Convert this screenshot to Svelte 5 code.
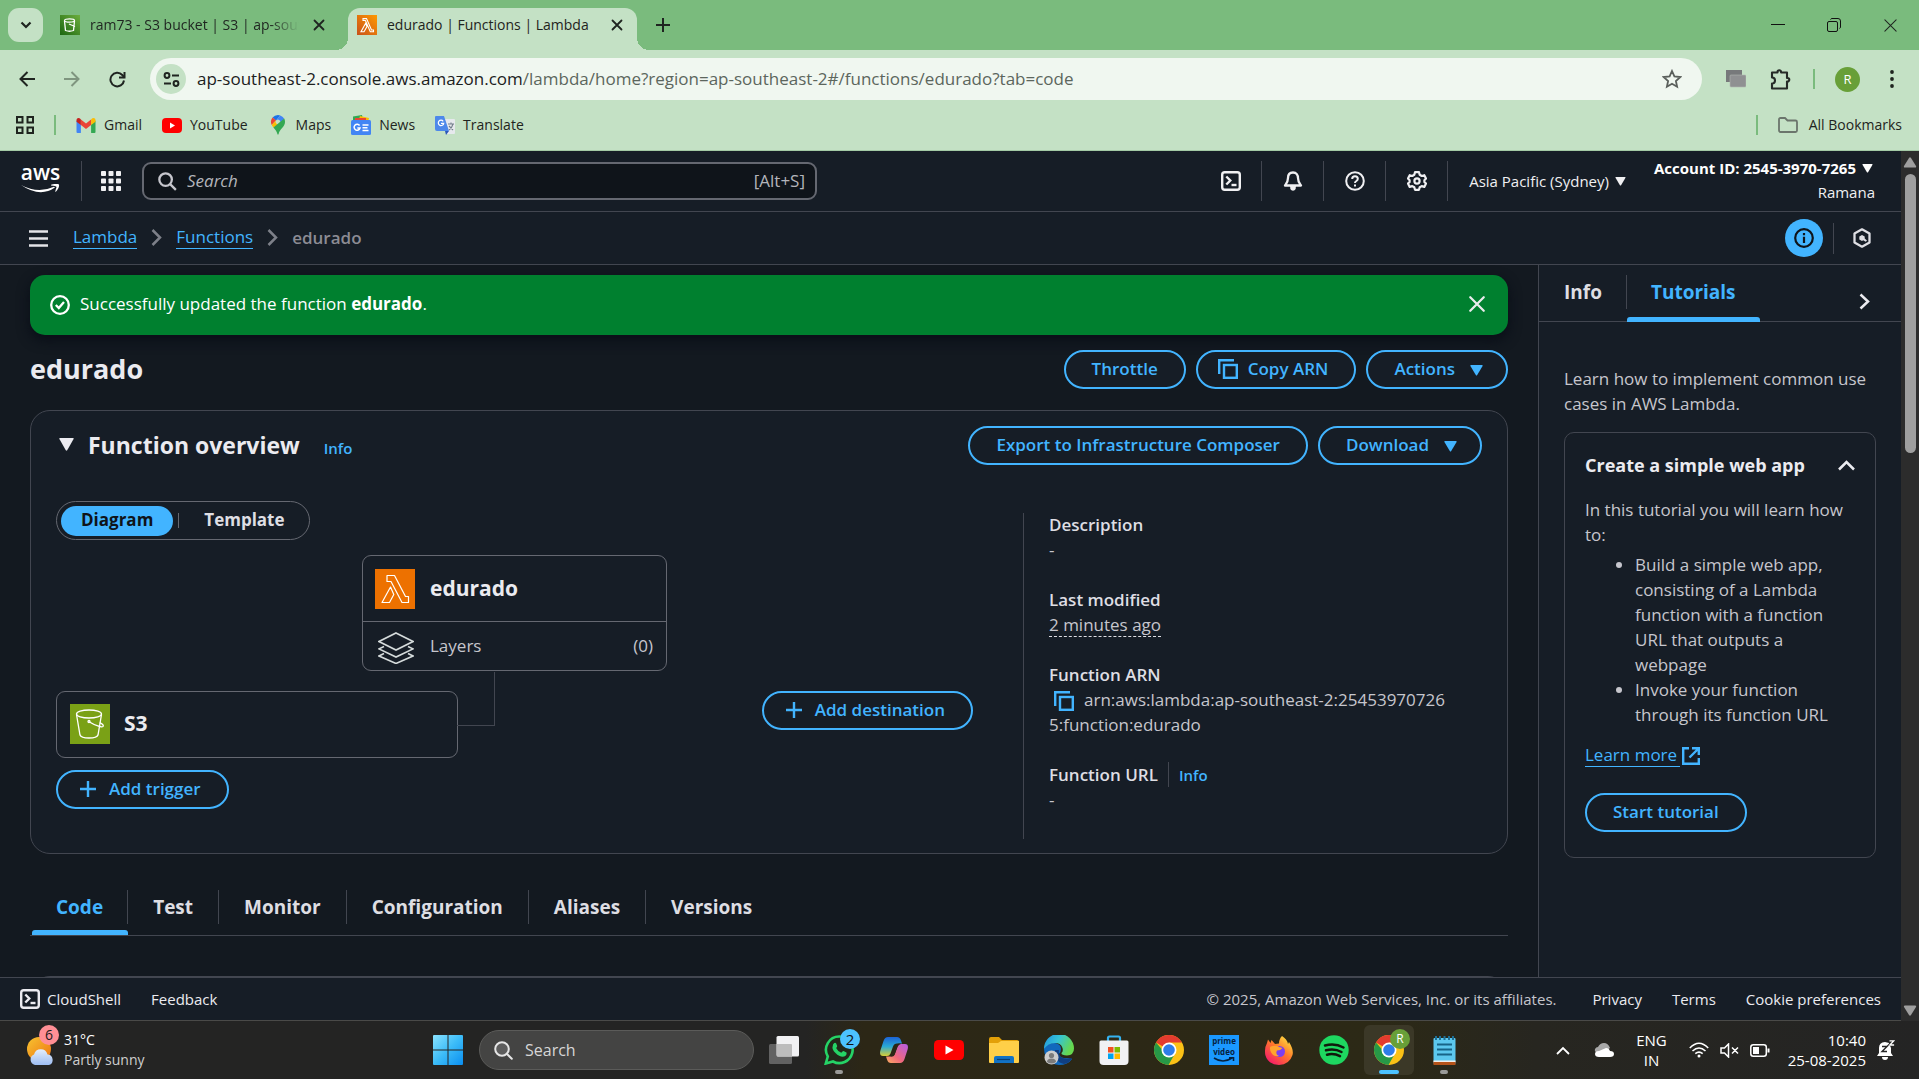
<script>
  const bookmarks = [
    { name: 'Gmail', icon: 'gmail' },
    { name: 'YouTube', icon: 'youtube' },
    { name: 'Maps', icon: 'maps' },
    { name: 'News', icon: 'news' },
    { name: 'Translate', icon: 'translate' }
  ];
  const tabs = ['Code', 'Test', 'Monitor', 'Configuration', 'Aliases', 'Versions'];
  const apps = [
    'taskview', 'whatsapp', 'copilot', 'youtube', 'explorer', 'edge', 'store',
    'chrome', 'prime', 'firefox', 'spotify', 'chrome-active', 'notepad'
  ];
  let activeTab = $state('Code');
  let consoleQuery = $state('');
  let address = 'ap-southeast-2.console.aws.amazon.com';
  let addressPath = '/lambda/home?region=ap-southeast-2#/functions/edurado?tab=code';
</script>

{#snippet closeIcon(size, width)}
  <svg width={size} height={size} viewBox="0 0 16 16" fill="none" stroke="currentColor" stroke-width={width} stroke-linecap="round"><path d="M2 2l12 12M14 2L2 14" /></svg>
{/snippet}

{#snippet shellIcon()}
  <svg width="20" height="20" viewBox="0 0 20 20" fill="none" stroke="currentColor" stroke-width="2.4"><rect x="1.2" y="1.2" width="17.6" height="17.6" rx="2.5" /><path d="M5.3 5.5l4 4-4 4" /><path d="M10.5 14h5" /></svg>
{/snippet}

{#snippet caret()}
  <svg class="caret" width="13" height="11" viewBox="0 0 13 11" fill="currentColor"><path d="M1 0h11q1 0 .6 1L7.2 10q-.7 1-1.4 0L.4 1Q0 0 1 0z" /></svg>
{/snippet}

{#snippet plus()}
  <svg width="16" height="16" viewBox="0 0 16 16" fill="none" stroke="currentColor" stroke-width="2.4"><path d="M8 0v16M0 8h16" /></svg>
{/snippet}

{#snippet copyIcon()}
  <svg width="20" height="20" viewBox="0 0 20 20" fill="none" stroke="currentColor" stroke-width="2.4"><path d="M1.2 15V1.2H16" /><rect x="6" y="6" width="12.8" height="12.8" /></svg>
{/snippet}

{#snippet chevron()}
  <svg class="chevron" width="11" height="17" viewBox="0 0 11 17" fill="none" stroke="currentColor" stroke-width="2.5"><path d="M1.5 1l7.5 7.5L1.5 16" /></svg>
{/snippet}

{#snippet bucket(size)}
  <svg width={size} height={size} viewBox="0 0 40 40"><rect width="40" height="40" fill="#7aa116" /><g fill="none" stroke="#fff" stroke-width="1.3"><ellipse cx="19" cy="10" rx="12.5" ry="4" /><path d="M6.5 10.5L10 31q1 3 9 3t9-3l3.5-20.500" /><circle cx="19" cy="17.500" r="1" /><path d="M19.500 18c4 2.500 13.500 6.500 13.800 4 .2-1.200-2-2.600-3.600-3.400" /></g></svg>
{/snippet}

{#snippet chromeIcon()}
  <svg width="30" height="30" viewBox="0 0 30 30"><circle cx="15" cy="15" r="15" fill="#fbc116" /><path d="M15 15L2 7.500A15 15 0 0 1 28 7.500H15z" fill="#e33b2e" /><path d="M2 7.500A15 15 0 0 0 14.500 30L21 18.500 15 15H8.500z" fill="#279847" /><circle cx="15" cy="15" r="7.500" fill="#fff" /><circle cx="15" cy="15" r="5.800" fill="#2f7de9" /></svg>
{/snippet}

{#snippet favicon(kind)}
  {#if kind === 'gmail'}
    <svg width="20" height="15" viewBox="0 0 19 15"><path d="M0 2.500V14q0 1 1 1h3.400V6.500z" fill="#4285f4" /><path d="M14.600 15H18q1 0 1-1V2.500l-4.400 4z" fill="#34a853" /><path d="M4.400 7V1.600L9.500 5.500l5.100-3.900V7L9.500 11z" fill="#ea4335" /><path d="M0 3v-.8C0 0 2.400-.5 4 .9l.4.700V7L0 3.800z" fill="#c5221f" /><path d="M19 3v-.8C19 0 16.600-.5 15 .9l-.4.700V7L19 3.800z" fill="#fbbc04" /></svg>
  {:else if kind === 'youtube'}
    <svg width="20" height="15" viewBox="0 0 20 15"><rect width="20" height="15" rx="4" fill="#f00" /><path d="M8 4.500l5 3-5 3z" fill="#fff" /></svg>
  {:else if kind === 'maps'}
    <svg width="20" height="20" viewBox="-3 0 20 20"><path d="M7 0a7 7 0 0 0-5.400 2.500L5 5.500 9.200.4A7 7 0 0 0 7 0z" fill="#1a73e8" /><path d="M1.600 2.500A7 7 0 0 0 .7 10L5 5.300z" fill="#ea4335" /><path d="M9.200.4L5.300 5a2.600 2.600 0 0 1 3.800 3.400l4-5A7 7 0 0 0 9.200.4z" fill="#4285f4" /><path d="M.7 10l1.700 2.500L9 8.600A2.600 2.600 0 0 1 5 5.300z" fill="#fbbc04" /><path d="M13.200 3.600L2.400 12.500C4.500 14.700 6 17 6.400 19q.6 1.600 1.200 0c.9-5 6.400-7 6.400-12a7 7 0 0 0-.8-3.400z" fill="#34a853" /></svg>
  {:else if kind === 'news'}
    <svg width="20" height="20" viewBox="0 0 20 20"><path d="M2 1.500L11 0l1 6H2z" fill="#34a853" /><path d="M9 1l9 2-1 4H7z" fill="#fbbc04" /><path d="M4 3h11v4H4z" fill="#ea4335" /><rect y="5" width="20" height="15" rx="1.500" fill="#4285f4" /><path d="M8.600 10.500A3 3 0 1 0 9 13H6.300M11.500 10h6M11.500 12.700h5M11.500 15.400h6" fill="none" stroke="#fff" stroke-width="1.500" /></svg>
  {:else}
    <svg width="20" height="20" viewBox="0 0 20 20"><path d="M8 4h11q1 0 1 1v13q0 1-1 1h-7z" fill="#e6e9ed" /><path d="M1 1h8l5 15H2q-2 0-2-2V2q0-1 1-1z" fill="#4d88ea" /><path d="M10 16h4l-3 4z" fill="#2a56b8" /><path d="M8.200 6.300A2.700 2.700 0 1 0 8.700 8.300H6" fill="none" stroke="#fff" stroke-width="1.200" /><path d="M13 9h6M16 7.500V9M18 9q-1 4-4 6M14 11l4 4" fill="none" stroke="#75808d" stroke-width="1.100" /></svg>
  {/if}
{/snippet}

<div class="screen">
  <header class="browser">
    <div class="tabstrip">
      <button class="tab-search" aria-label="Search tabs">
        <svg width="12" height="8" viewBox="0 0 12 8" fill="none" stroke="currentColor" stroke-width="2.200"><path d="M1.500 1.500L6 6l4.500-4.500" /></svg>
      </button>
      <div class="browser-tab">
        <span class="fav s3">
          <svg width="20" height="20" viewBox="0 0 20 20" fill="none" stroke="#fff" stroke-width="1.300"><ellipse cx="9.500" cy="5.500" rx="5" ry="1.600" /><path d="M4.500 6l1 9.500q4 1.500 8 0L14.500 6M9 9l6 2.500" /></svg>
        </span>
        <span class="tab-title faded">ram73 - S3 bucket | S3 | ap-sout</span>
        <button class="plain" aria-label="Close tab">{@render closeIcon(12, 2.4)}</button>
      </div>
      <div class="browser-tab current">
        <span class="fav lambda">
          <svg width="20" height="20" viewBox="0 0 20 20" fill="none" stroke="#fff" stroke-width="1.100"><path d="M6 3.500h3.500l5 11.500h2v1.800h-3.200L8.300 5.400H6zM8.500 8.500L4 16.800h3l3-5.300z" /></svg>
        </span>
        <span class="tab-title">edurado | Functions | Lambda</span>
        <button class="plain" aria-label="Close tab">{@render closeIcon(12, 2.4)}</button>
      </div>
      <button class="plain new-tab" aria-label="New tab">
        <svg width="14" height="14" viewBox="0 0 14 14" fill="none" stroke="currentColor" stroke-width="2"><path d="M7 0v14M0 7h14" /></svg>
      </button>
      <div class="window-controls">
        <button class="plain" aria-label="Minimize"><svg width="14" height="14" viewBox="0 0 14 14" stroke="#111" fill="none"><path d="M0 6.500h14" /></svg></button>
        <button class="plain" aria-label="Restore"><svg width="14" height="14" viewBox="0 0 14 14" stroke="#111" fill="none"><rect x=".5" y="3.500" width="10" height="10" rx="1.500" /><path d="M3.500 1.500q.5-1 1.500-1h6q2.500 0 2.500 2.500v6q0 1-1 1.500" /></svg></button>
        <button class="plain" aria-label="Close window">{@render closeIcon(15, 1.1)}</button>
      </div>
    </div>

    <div class="toolbar">
      <button class="plain nav" aria-label="Back"><svg width="16" height="16" viewBox="0 0 16 16" fill="none" stroke="currentColor" stroke-width="2"><path d="M16 8H2M8.500 1L1.500 8l7 7" /></svg></button>
      <button class="plain nav off" aria-label="Forward"><svg width="16" height="16" viewBox="0 0 16 16" fill="none" stroke="currentColor" stroke-width="2"><path d="M0 8h14M7.500 1l7 7-7 7" /></svg></button>
      <button class="plain nav" aria-label="Reload"><svg width="17" height="17" viewBox="0 0 17 17" fill="none" stroke="currentColor" stroke-width="2"><path d="M15 9.500A6.800 6.800 0 1 1 13.300 4L15.500 6.500" /><path d="M15.500 1v5.500H10" /></svg></button>
      <div class="omnibox">
        <button class="plain site-info" aria-label="Site information"><svg width="17" height="17" viewBox="0 0 17 17" fill="none" stroke="currentColor" stroke-width="2"><circle cx="4" cy="4.500" r="2.400" /><path d="M9 4.500h7M1 12.500h7" /><circle cx="13" cy="12.500" r="2.400" /></svg></button>
        <a class="url" href="#top"><span>{address}</span>{addressPath}</a>
        <button class="plain star" aria-label="Bookmark this page"><svg width="20" height="20" viewBox="0 0 20 20" fill="none" stroke="currentColor" stroke-width="1.800"><path d="M10 2l2.400 5.400 5.900.6-4.400 4 1.200 5.800L10 14.800l-5.100 3L6.100 12 1.700 8l5.900-.6z" /></svg></button>
      </div>
      <div class="extensions">
        <svg width="20" height="18" viewBox="0 0 20 18"><rect x="0" y="0" width="16" height="12" fill="#77797b" /><rect x="4" y="5" width="16" height="12" rx="1" fill="#8f9092" stroke="#b2b7b2" stroke-width=".6" /></svg>
        <svg width="21" height="21" viewBox="0 0 21 21" fill="none" stroke="#262b27" stroke-width="2.100"><path d="M2 3.500h5.500V3a1.800 1.800 0 0 1 3.600 0v.500H17V9h.5a1.800 1.800 0 0 1 0 3.600H17V19.500H2v-5a3 3 0 0 0 0-6z" stroke-linejoin="round" /></svg>
        <i class="green-bar"></i>
        <span class="avatar">R</span>
        <svg width="4" height="18" viewBox="0 0 4 18" fill="#1f241f"><circle cx="2" cy="2" r="1.900" /><circle cx="2" cy="9" r="1.900" /><circle cx="2" cy="16" r="1.900" /></svg>
      </div>
    </div>

    <nav class="bookmarks">
      <button class="plain" aria-label="Apps"><svg width="18" height="18" viewBox="0 0 18 18" fill="none" stroke="#1f241f" stroke-width="2"><rect x="1" y="1" width="5.500" height="5.500" /><rect x="11.500" y="1" width="5.500" height="5.500" /><rect x="1" y="11.500" width="5.500" height="5.500" /><rect x="11.500" y="11.500" width="5.500" height="5.500" /></svg></button>
      <i class="green-bar"></i>
      {#each bookmarks as mark}
        <a href="#{mark.icon}">{@render favicon(mark.icon)}{mark.name}</a>
      {/each}
      <div class="all-bookmarks">
        <i class="green-bar"></i>
        <a href="#all"><svg width="20" height="16" viewBox="0 0 20 16" fill="none" stroke="#6b756c" stroke-width="1.800"><path d="M1 13V2.500Q1 1 2.500 1H7l2.500 2.500h8Q19 3.500 19 5v8.500q0 1.500-1.500 1.500h-15Q1 15 1 13z" /></svg>All Bookmarks</a>
      </div>
    </nav>
  </header>

  <div class="viewport">
    <div class="console">
      <header class="aws-header">
        <a class="aws-logo" href="#home" aria-label="AWS home">
          <span>aws</span>
          <svg width="39" height="10" viewBox="0 0 39 10" fill="#fff"><path d="M0 1q17 9 33 1.800l1 .8Q19 14 0 1z" /><path d="M30 .8q7-2 8 0 .6 3-3.400 7.200-.8-.2 1-5Q35 1.600 30 1.500z" /></svg>
        </a>
        <i class="rule"></i>
        <button class="plain services" aria-label="Services"><svg width="20" height="20" viewBox="0 0 20 20" fill="#f0f0f2">{#each [0, 7.500, 15] as y}{#each [0, 7.500, 15] as x}<rect {x} {y} width="5" height="5" rx=".8" />{/each}{/each}</svg></button>
        <div class="aws-search">
          <svg width="19" height="19" viewBox="0 0 20 20" fill="none" stroke="#c6c6cd" stroke-width="2.400"><circle cx="8" cy="8" r="6.600" /><path d="M12.800 12.800l6 6" /></svg>
          <input type="text" aria-label="Search services" placeholder="Search" bind:value={consoleQuery} />
          <span>[Alt+S]</span>
        </div>
        <div class="aws-tools">
          <button class="plain tool" aria-label="CloudShell">{@render shellIcon()}</button>
          <button class="plain tool" aria-label="Notifications"><svg width="20" height="20" viewBox="0 0 20 20" fill="none" stroke="currentColor" stroke-width="2.300"><path d="M10 1.500c-3.500 0-5 2.500-5 5.500 0 4-1.500 5.500-3 7.500h16c-1.500-2-3-3.500-3-7.500 0-3-1.500-5.500-5-5.500z" stroke-linejoin="round" /><path d="M7 15q0 3.500 3 3.500t3-3.500z" fill="currentColor" stroke="none" /><path d="M8 17q2 3 4 0" /></svg></button>
          <button class="plain tool" aria-label="Help"><svg width="20" height="20" viewBox="0 0 20 20" fill="none" stroke="currentColor" stroke-width="2"><circle cx="10" cy="10" r="8.800" /><path d="M7.200 8q0-2.700 2.800-2.700t2.800 2.500q0 1.400-1.400 2.200T10 12" /><path d="M10 13.500v2" /></svg></button>
          <button class="plain tool" aria-label="Settings"><svg width="20" height="20" viewBox="0 0 20 20" fill="none" stroke="currentColor" stroke-width="2.200" stroke-linejoin="round"><path d="M8 1.200h4l.7 2.600 2 1.200 2.600-.8 1.700 3.300-1.600 1.700v1.700l1.600 1.700-1.700 3.300-2.600-.8-2 1.200-.7 2.500H8l-.7-2.500-2-1.200-2.600.8L1 12.600l1.600-1.700V9.200L1 7.500l1.700-3.300 2.600.8 2-1.200z" /><circle cx="10" cy="10" r="2.600" /></svg></button>
          <button class="plain region">Asia Pacific (Sydney){@render caret()}</button>
          <button class="plain account"><b>Account ID: 2545-3970-7265{@render caret()}</b><span>Ramana</span></button>
        </div>
      </header>

      <div class="crumbs">
        <button class="plain" aria-label="Open menu"><svg width="19" height="17" viewBox="0 0 19 17" stroke="#e4e4e8" stroke-width="2.600"><path d="M0 1.500h19M0 8.500h19M0 15.500h19" /></svg></button>
        <nav>
          <a href="#lambda">Lambda</a>{@render chevron()}<a href="#functions">Functions</a>{@render chevron()}<b>edurado</b>
        </nav>
        <button class="plain info-toggle" aria-label="Info panel"><svg width="20" height="20" viewBox="0 0 20 20" fill="none" stroke="currentColor" stroke-width="2.200"><circle cx="10" cy="10" r="8.800" /><path d="M10 8.800V15M10 5v2.200" /></svg></button>
        <i class="rule"></i>
        <button class="plain hexagon" aria-label="Amazon Q"><svg width="20" height="20" viewBox="0 0 20 20" fill="none" stroke="currentColor" stroke-width="2.300"><path d="M10 1.300l7.500 4.300v8.800L10 18.700l-7.500-4.300V5.600z" stroke-linejoin="round" /><path d="M10 7l2.700 1.500v2l2.300 2-1.300 1.200-2.500-1.500L10 13l-2.700-1.500v-3z" fill="currentColor" stroke="none" /></svg></button>
      </div>

      <div class="body">
        <main>
          <div class="flash" role="status">
            <svg width="20" height="20" viewBox="0 0 20 20" fill="none" stroke="currentColor" stroke-width="2.300"><circle cx="10" cy="10" r="8.800" /><path d="M5.800 10l3 3 5.200-6" /></svg>
            <p>Successfully updated the function <b>edurado</b>.</p>
            <button class="plain" aria-label="Dismiss">{@render closeIcon(18, 2)}</button>
          </div>

          <div class="title-row">
            <h1>edurado</h1>
            <button class="pill">Throttle</button>
            <button class="pill copy">{@render copyIcon()}Copy ARN</button>
            <button class="pill drop">Actions{@render caret()}</button>
          </div>

          <section class="overview">
            <div class="overview-head">
              <h2><svg width="15" height="13" viewBox="0 0 15 13" fill="currentColor"><path d="M.800 0h13.400q.8 0 .4.900L8.200 12.200q-.7.900-1.400 0L.4.900Q0 0 .800 0z" /></svg>Function overview</h2>
              <a class="info" href="#overview-info">Info</a>
              <button class="pill">Export to Infrastructure Composer</button>
              <button class="pill drop">Download{@render caret()}</button>
            </div>
            <div class="overview-body">
              <div class="diagram">
                <div class="segmented">
                  <button class="on">Diagram</button>
                  <i></i>
                  <button>Template</button>
                </div>
                <div class="node function-node">
                  <div class="node-title">
                    <svg width="40" height="40" viewBox="0 0 40 40"><rect width="40" height="40" fill="#ed7100" /><path d="M12 6.500h7.500l11 21h3v6h-6.500L16 12.500h-4zM15.500 18L7 33.500h7.500l4.300-8z" fill="none" stroke="#fff" stroke-width="1.200" stroke-linejoin="round" /></svg>
                    edurado
                  </div>
                  <div class="layers">
                    <svg width="36" height="32" viewBox="0 0 36 32" fill="none" stroke="#d5dbdb" stroke-width="1.600"><path d="M18 1l17 8.500L18 18 1 9.500z" /><path d="M6 14.500l-5 2.400L18 25l17-8.100-5-2.400M6 21.500L1 24l17 7.500L35 24l-5-2.500" /></svg>
                    <span>Layers</span><span>(0)</span>
                  </div>
                </div>
                <div class="sources">
                  <div class="node s3-node">{@render bucket(40)}S3<i class="link"></i></div>
                  <button class="pill add">{@render plus()}Add destination</button>
                </div>
                <button class="pill add">{@render plus()}Add trigger</button>
              </div>
              <dl>
                <div><dt>Description</dt><dd>-</dd></div>
                <div><dt>Last modified</dt><dd><span class="dashed">2 minutes ago</span></dd></div>
                <div><dt>Function ARN</dt><dd class="arn"><button class="plain" aria-label="Copy ARN">{@render copyIcon()}</button>arn:aws:lambda:ap-southeast-2:254539707265:function:edurado</dd></div>
                <div><dt>Function URL<a class="info" href="#url-info">Info</a></dt><dd>-</dd></div>
              </dl>
            </div>
          </section>

          <div class="tabs" role="tablist">
            {#each tabs as tab}
              <button role="tab" aria-selected={activeTab === tab} class:active={activeTab === tab} onclick={() => (activeTab = tab)}><span>{tab}</span></button>
            {/each}
          </div>
          <section class="next-panel"></section>
        </main>

        <aside>
          <div class="side-tabs" role="tablist">
            <button role="tab" aria-selected="false"><span>Info</span></button>
            <button role="tab" aria-selected="true" class="active"><span>Tutorials</span></button>
            <button class="plain collapse" aria-label="Close panel"><svg width="11" height="17" viewBox="0 0 11 17" fill="none" stroke="currentColor" stroke-width="2.500"><path d="M1.500 1.500l7.500 7-7.500 7" /></svg></button>
          </div>
          <div class="side-body">
            <p>Learn how to implement common use cases in AWS Lambda.</p>
            <div class="card">
              <h3>Create a simple web app<svg width="17" height="11" viewBox="0 0 17 11" fill="none" stroke="currentColor" stroke-width="2.500"><path d="M1 9.500L8.500 2 16 9.500" /></svg></h3>
              <p>In this tutorial you will learn how to:</p>
              <ul>
                <li>Build a simple web app, consisting of a Lambda function with a function URL that outputs a webpage</li>
                <li>Invoke your function through its function URL</li>
              </ul>
              <a class="learn" href="#learn"><span>Learn more</span><svg width="18" height="18" viewBox="0 0 18 18" fill="none" stroke="currentColor" stroke-width="2.400"><path d="M7 1.200H1.200v15.600h15.600V11M10 1.200h6.800V8M16.500 1.500L7.500 10.500" /></svg></a>
              <button class="pill">Start tutorial</button>
            </div>
          </div>
        </aside>
      </div>

      <footer>
        <button class="plain">{@render shellIcon()}CloudShell</button>
        <button class="plain feedback">Feedback</button>
        <span>© 2025, Amazon Web Services, Inc. or its affiliates.</span>
        <a href="#privacy">Privacy</a>
        <a href="#terms">Terms</a>
        <a href="#cookies">Cookie preferences</a>
      </footer>
    </div>
    <div class="scrollbar">
      <svg width="14" height="11" viewBox="0 0 14 11" fill="#9f9f9f"><path d="M6 1q1-1.500 2 0l5 8q.5 1.500-1 1.500H2Q.5 10.500 1 9z" /></svg>
      <i></i>
      <svg width="14" height="11" viewBox="0 0 14 11" fill="#9f9f9f"><path d="M6 10q1 1.500 2 0l5-8Q13.500.5 12 .5H2Q.5.5 1 2z" /></svg>
    </div>
  </div>

  <div class="taskbar">
    <button class="plain weather">
      <span class="weather-icon">
        <svg width="28" height="32" viewBox="0 0 28 32"><defs><linearGradient id="sun" x1="0" y1="0" x2="1" y2="1"><stop offset="0" stop-color="#f7c430" /><stop offset="1" stop-color="#ee7313" /></linearGradient><linearGradient id="cloud" x1="0" y1="0" x2="0" y2="1"><stop offset="0" stop-color="#e4eefc" /><stop offset="1" stop-color="#9dbdf2" /></linearGradient></defs><circle cx="12" cy="15" r="12" fill="url(#sun)" /><path d="M8 31a5.500 5.500 0 0 1-1-10.500 7 7 0 0 1 13.500 0A5.400 5.400 0 0 1 22 31z" fill="url(#cloud)" /></svg>
        <em>6</em>
      </span>
      <span class="weather-text"><span>31°C</span><span>Partly sunny</span></span>
    </button>
    <button class="plain start" aria-label="Start"><svg width="30" height="30" viewBox="0 0 30 30"><defs><linearGradient id="win" x1="0" y1="0" x2="1" y2="1"><stop offset="0" stop-color="#8be3ff" /><stop offset=".5" stop-color="#3cbcf8" /><stop offset="1" stop-color="#0a8ef0" /></linearGradient></defs><path d="M0 1q0-1 1-1h13.500v14.500H0zM15.500 0H29q1 0 1 1v13.500H15.500zM0 15.500h14.500V30H1q-1 0-1-1zM15.500 15.500H30V29q0 1-1 1H15.500z" fill="url(#win)" /></svg></button>
    <div class="task-search">
      <svg width="19" height="19" viewBox="0 0 19 19" fill="none" stroke="#e6e6e6" stroke-width="2"><circle cx="8" cy="8" r="6.800" fill="#5d5d5d" /><path d="M12.800 12.800l5 5" stroke-linecap="round" /></svg>
      <input type="text" aria-label="Search Windows" placeholder="Search" />
    </div>
    <div class="apps">
      {#each apps as app}
        <button class="plain app" class:focused={app === 'chrome-active'} class:running={app === 'whatsapp' || app === 'notepad'} aria-label={app}>
          {#if app === 'taskview'}
            <svg width="30" height="28" viewBox="0 0 30 28"><rect x="0" y="8" width="23" height="20" rx="1.500" fill="#626262" /><rect x="7.500" y="0" width="22.500" height="20.500" rx="1.500" fill="#f2f2f4" /><path d="M8 8h14q1 0 1 1v11.500H9q-1 0-1-1z" fill="#bdbdbd" /></svg>
          {:else if app === 'whatsapp'}
            <svg width="30" height="30" viewBox="0 0 30 30"><path d="M15.500 1.500a13.300 13.300 0 1 1-6.500 25L1.800 28.500l2-7A13.300 13.300 0 0 1 15.500 1.500z" fill="#22281a" stroke="#25d366" stroke-width="2.600" /><path d="M10.300 8q1-.8 1.900.4l1 2.500q.1.800-1.100 2 1.700 3.400 5.200 4.900 1.500-2 2.200-1.800l3 1.500q.8 3.500-3.500 4.300-3.500.2-7.500-3.800T8.700 11.200Q8.800 9 10.300 8z" fill="#25d366" /></svg>
            <em class="badge">2</em>
          {:else if app === 'copilot'}
            <svg width="28" height="26" viewBox="0 0 28 26"><defs><linearGradient id="cp1" x1="0" y1="0" x2="0" y2="1"><stop offset="0" stop-color="#1c63d6" /><stop offset=".5" stop-color="#2aa9d6" /><stop offset="1" stop-color="#d8cf35" /></linearGradient><linearGradient id="cp2" x1="1" y1="0" x2="0" y2="1"><stop offset="0" stop-color="#b45ce8" /><stop offset=".6" stop-color="#f0687c" /><stop offset="1" stop-color="#fbb060" /></linearGradient></defs><path d="M8 0h9q3 0 4 3.500l1 3h-5q-3 0-4 3l-2.500 7q-1 2.500-3.500 2.500H3Q-1 19 .4 13.500L3.500 4Q4.800 0 8 0z" fill="url(#cp1)" /><path d="M20 26h-9q-3 0-4-3.500l-1-3h5q3 0 4-3l2.500-7Q18.500 7 21 7h4q4 0 2.600 5.500L24.500 22q-1.300 4-4.500 4z" fill="url(#cp2)" /><path d="M15 9.500q.5-2.500 4-3h2q-2.500.5-3.500 3.500l-3 8q-.8 1.500-3 1.500-1.500 0-1-1.500z" fill="#2c2716" /></svg>
          {:else if app === 'youtube'}
            <svg width="30" height="20" viewBox="0 0 30 20"><rect width="30" height="20" rx="4.500" fill="#f00" /><path d="M11.500 5.500l8 4.500-8 4.500z" fill="#fff" /></svg>
          {:else if app === 'explorer'}
            <svg width="30" height="26" viewBox="0 0 30 26"><path d="M0 2q0-2 2-2h8l3 3h15q2 0 2 2v8H0z" fill="#e3a008" /><path d="M0 6h9l3-2h18v21q0 1-1 1H1q-1 0-1-1z" fill="#ffcf48" /><path d="M5 26v-5q0-2 2-2h16q2 0 2 2v5z" fill="#1272c4" /><path d="M8 22.500h13" stroke="#0a3f73" stroke-width="1.200" /></svg>
          {:else if app === 'edge'}
            <svg width="30" height="30" viewBox="0 0 30 30"><defs><linearGradient id="eg1" x1="0" y1="0" x2="1" y2=".4"><stop offset="0" stop-color="#1f8fe0" /><stop offset=".5" stop-color="#35c3d6" /><stop offset="1" stop-color="#66d84f" /></linearGradient></defs><path d="M0 14q3-7 11-6 6 1 6 6 0 3-2 5 0 3 5 4 5 0 8 1-4 6-13 6Q1 29 0 14z" fill="#1169bd" /><path d="M0 14A15 15 0 0 1 30 13.500q0 6.500-7 7-6 0-5.500-2.500 2-2 1-5Q17 8 11 8 4 8 0 14z" fill="url(#eg1)" /><path d="M11 15q-1 12 9 14 6-1 8-6-7 2-11-1-3-3-2-7z" fill="#103f82" /><circle cx="7.500" cy="22.500" r="7" fill="#cdcdcd" /><circle cx="7.500" cy="20.500" r="2.600" fill="#7b7b7b" /><path d="M3 27q0-3.500 4.500-3.500T12 27q-4.500 3-9 0z" fill="#7b7b7b" /></svg>
          {:else if app === 'store'}
            <svg width="30" height="30" viewBox="0 0 30 30"><path d="M9 8V3q0-1.500 1.500-1.500h9Q21 1.500 21 3v5" fill="none" stroke="#35b2f0" stroke-width="2.200" /><path d="M.5 7q0-1.500 1.500-1.500h26q1.500 0 1.500 1.500v19q0 4-4 4h-21q-4 0-4-4z" fill="#f1f1f3" /><path d="M9 12h5.500v5.500H9z" fill="#f25022" /><path d="M15.500 12H21v5.500h-5.500z" fill="#7fba00" /><path d="M9 18.500h5.500V24H9z" fill="#00a4ef" /><path d="M15.500 18.500H21V24h-5.500z" fill="#ffb900" /></svg>
          {:else if app === 'chrome'}
            {@render chromeIcon()}
          {:else if app === 'prime'}
            <span class="prime"><span>prime</span><span>video</span><svg width="22" height="6" viewBox="0 0 22 6" fill="none" stroke="#06213d" stroke-width="1.600"><path d="M1 1q9 6 18 0M16 .8h4.500V4" /></svg></span>
          {:else if app === 'firefox'}
            <svg width="28" height="29" viewBox="0 0 28 29"><defs><linearGradient id="ff" x1="1" y1="0" x2=".2" y2="1"><stop offset=".1" stop-color="#ffe040" /><stop offset=".5" stop-color="#ff7a2a" /><stop offset="1" stop-color="#f5156c" /></linearGradient></defs><path d="M17 0q5 3 6 8l1-2q5 8 3.500 13-3 9.500-13.500 10Q3 28.500.3 19-.8 12 2 7l1-3.500L5.500 7l1-3 3.500 4 4-.5Q14 3 17 0z" fill="url(#ff)" /><circle cx="14.500" cy="15.500" r="5.500" fill="#7b3ff0" /><path d="M5.500 10.500q6-1.500 8.500.5l3.500 1q-2 2.500-5.500 2.500-2 4 2 5.500-5 1-7.500-3T5.500 10.500z" fill="#ffa42e" /></svg>
          {:else if app === 'spotify'}
            <svg width="30" height="30" viewBox="0 0 30 30"><circle cx="15" cy="15" r="14.700" fill="#1ed760" /><path d="M6 10.500q10-2.700 18.500 2M7 15.300q8.500-2.300 15.500 1.700M8 19.700q7-1.700 13 1.500" fill="none" stroke="#10190c" stroke-width="2.500" stroke-linecap="round" /></svg>
          {:else if app === 'chrome-active'}
            {@render chromeIcon()}<em class="badge profile">R</em>
          {:else}
            <svg width="23" height="30" viewBox="0 0 23 30"><rect x=".5" y="3" width="22" height="26" rx="1" fill="#5cc8ee" /><path d="M.5 26h22v4H.5z" fill="#b5531a" /><path d="M.5 25.500h22v1.500H.5z" fill="#eee" /><path d="M3 1v4M7 1v4M11.500 1v4M16 1v4M20 1v4" stroke="#1d6f96" stroke-width="2" /><path d="M4 9.500h15M4 14.500h15M4 19.500h15" stroke="#176487" stroke-width="1.800" /></svg>
          {/if}
        </button>
      {/each}
    </div>
    <div class="tray">
      <svg width="14" height="9" viewBox="0 0 14 9" fill="none" stroke="#fff" stroke-width="1.800"><path d="M1 8l6-6 6 6" /></svg>
      <svg class="cloud" width="20" height="14" viewBox="0 0 20 14"><path d="M4 10q-4-1-3-4 1-2 3-2 2-4 6-4t6 5L8 11z" fill="#a8a8a8" /><path d="M5 14q-4 0-4-3t4-3l7-3q3 0 4 3 4 0 4 3t-4 3z" fill="#fff" /></svg>
      <span class="lang"><span>ENG</span><span>IN</span></span>
      <svg width="20" height="16" viewBox="0 0 20 16" fill="none" stroke="#fff" stroke-width="1.600"><path d="M.8 6Q10-3.500 19.200 6M3.500 9q6.500-6 13 0M6.300 11.600q3.700-3 7.400 0" /><circle cx="10" cy="14" r="1.500" fill="#fff" stroke="none" /></svg>
      <svg width="19" height="15" viewBox="0 0 19 15" fill="none" stroke="#fff" stroke-width="1.500"><path d="M1 5h3.500L8.500 1v13l-4-4H1zM12 4.500l6 6M18 4.500l-6 6" /></svg>
      <svg width="20" height="13" viewBox="0 0 20 13" fill="none" stroke="#fff" stroke-width="1.500"><rect x=".8" y=".8" width="15.500" height="11.400" rx="2.500" /><rect x="3" y="3" width="6" height="7" fill="#fff" stroke="none" /><path d="M18.500 4.500v4" stroke-width="2" /></svg>
      <span class="clock"><span>10:40</span><span>25-08-2025</span></span>
      <svg width="18" height="20" viewBox="0 0 18 20"><path d="M8 2Q2 2.500 2 8v5l-2 3h16l-2-3V8L12 3z" fill="#fff" /><path d="M5 17h6q0 3-3 3t-3-3z" fill="#fff" /><path d="M5 6.500h5L5 11.500h5M11.500 1h4l-4 4h4" fill="none" stroke="#252525" stroke-width="1.400" /><path d="M12.500.8h4.300l-4 4.200h4.300" fill="none" stroke="#fff" stroke-width="1.300" /></svg>
    </div>
  </div>
</div>

<style>
  :global(body) { margin: 0; background: #161d26; }
  * { box-sizing: border-box; }
  svg { display: block; flex: none; }
  button, input { font: inherit; color: inherit; }
  i { flex: none; }
  em { font-style: normal; }
  .plain { display: flex; align-items: center; background: none; border: 0; padding: 0; cursor: pointer; }

  .screen { height: 100vh; display: flex; flex-direction: column; overflow: hidden; font: 17px/25px "Open Sans", "Noto Sans", sans-serif; color: #c6c6cd; }

  /* browser chrome */
  .browser { flex: none; background: #c4e1c5; color: #1f2420; font-size: 14px; line-height: 20px; border-bottom: 1px solid #a3c9a5; }
  .tabstrip { height: 50px; background: #7abb7d; display: flex; align-items: flex-end; padding-left: 8px; }
  .tab-search { width: 35px; height: 34px; margin-bottom: 8px; border: 0; border-radius: 11px; background: #c4e1c5; display: grid; place-items: center; padding: 0; }
  .browser-tab { height: 42px; width: 288px; display: flex; align-items: center; gap: 10px; padding: 0 14px 8px 9px; margin-left: 8px; }
  .browser-tab.current { position: relative; width: 289px; margin-left: 9px; background: #c4e1c5; border-radius: 12px 12px 0 0; }
  .current::before, .current::after { content: ""; position: absolute; bottom: 0; width: 12px; height: 12px; }
  .current::before { right: 100%; background: radial-gradient(circle at 0 0, transparent 12px, #c4e1c5 12px); }
  .current::after { left: 100%; background: radial-gradient(circle at 100% 0, transparent 12px, #c4e1c5 12px); }
  .fav { width: 20px; height: 20px; }
  .fav.s3 { background: linear-gradient(45deg, #1b660f, #6cae3e); }
  .fav.lambda { background: linear-gradient(45deg, #c8511b, #f90); }
  .tab-title { flex: 1; white-space: nowrap; }
  .faded { max-width: 213px; margin-right: auto; mask-image: linear-gradient(90deg, #000 85%, transparent 98%); }
  .new-tab { height: 50px; margin-left: 19px; }
  .window-controls { margin-left: auto; height: 50px; display: flex; gap: 42px; padding-right: 21px; }
  .toolbar { height: 58px; display: flex; align-items: center; padding: 0 25px 0 19px; }
  .nav { width: 45px; height: 30px; }
  .nav.off { color: #7f957f; }
  .omnibox { flex: 1; min-width: 0; height: 42px; border-radius: 21px; background: #f0f7f0; display: flex; align-items: center; gap: 11px; padding: 0 20px 0 6px; margin-left: -4px; }
  .site-info { flex: none; width: 30px; height: 30px; border-radius: 50%; background: #c4e1c5; justify-content: center; }
  .url { flex: 1; min-width: 0; overflow: hidden; white-space: nowrap; font-size: 17px; line-height: 24px; color: #5c665d; text-decoration: none; }
  .url span { color: #1c211d; }
  .star { color: #5b605c; }
  .extensions { display: flex; align-items: center; gap: 24px; padding-left: 24px; }
  .green-bar { width: 2px; height: 20px; background: #7abb7d; }
  .avatar { width: 25px; height: 25px; border-radius: 50%; background: #689f38; color: #fff; display: grid; place-items: center; font-size: 13px; margin: 0 6px 0 -4px; }
  .extensions .green-bar { margin-left: -2px; }
  .bookmarks { height: 42px; display: flex; align-items: center; gap: 20px; padding: 0 17px 8px 16px; }
  .bookmarks a { display: flex; align-items: center; gap: 8px; color: inherit; text-decoration: none; }
  .all-bookmarks { margin-left: auto; display: flex; align-items: center; gap: 20px; }
  .all-bookmarks a { gap: 11px; }

  /* console frame */
  .viewport { flex: 1; min-height: 0; display: flex; }
  .console { flex: 1; min-width: 0; display: flex; flex-direction: column; background: #161d26; }
  .scrollbar { width: 18px; flex: none; background: #2c2c2c; display: flex; flex-direction: column; align-items: center; padding: 6px 0 5px; gap: 6px; }
  .scrollbar i { width: 11px; height: 279px; border-radius: 6px; background: #9f9f9f; margin-bottom: auto; }
  .rule { width: 1px; height: 40px; background: #424650; }
  .aws-header { height: 61px; flex: none; display: flex; align-items: center; border-bottom: 1px solid #424650; padding: 0 26px 0 21px; color: #f0f0f2; font-size: 15px; line-height: 24px; }
  .aws-logo { width: 39px; color: #fff; text-decoration: none; text-align: center; font-size: 21px; line-height: 16px; font-weight: 600; margin: 0 21px 4px 0; display: flex; flex-direction: column; gap: 4px; align-items: center; }
  .services { margin: 0 21px 0 19px; }
  .aws-search { width: 675px; height: 38px; display: flex; align-items: center; gap: 10px; padding: 0 10px 0 14px; border: 2px solid #656871; border-radius: 9px; background: #0f141a; color: #b4b4bb; font-size: 17px; }
  .aws-search input { flex: 1; min-width: 0; border: 0; background: none; outline: 0; padding: 0; font-style: italic; }
  .aws-search input::placeholder, .task-search input::placeholder { color: inherit; opacity: 1; }
  .aws-tools { margin-left: auto; display: flex; align-items: center; }
  .tool { width: 62px; height: 40px; justify-content: center; border-right: 1px solid #424650; }
  .caret { margin-left: 6px; width: 11px; height: 9px; }
  .region { padding: 0 28px 0 21px; white-space: nowrap; }
  .account { flex-direction: column; align-items: flex-end; white-space: nowrap; padding-bottom: 2px; }
  .account b { display: flex; align-items: center; color: #fff; padding-right: 2px; }

  .crumbs { height: 53px; flex: none; display: flex; align-items: center; border-bottom: 1px solid #424650; padding: 0 29px; color: #8c8c94; }
  .crumbs nav { display: flex; align-items: center; gap: 14px; margin: 0 auto 2px 25px; }
  .crumbs a { color: #42b4ff; text-decoration: none; border-bottom: 1px solid; line-height: 22px; }
  .crumbs b { font-weight: 600; }
  .chevron { color: #7d8089; }
  .info-toggle { width: 38px; height: 38px; border-radius: 50%; background: #42b4ff; color: #0f141a; justify-content: center; margin-right: 10px; }
  .crumbs .rule { height: 31px; }
  .hexagon { color: #dedee3; margin-left: 18px; }

  .body { flex: 1; min-height: 0; display: flex; overflow: hidden; }
  main { flex: 1; min-width: 0; background: #131920; padding: 10px 30px 0; overflow: hidden; }
  .flash { height: 60px; border-radius: 15px; background: #00802f; color: #fff; display: flex; align-items: center; gap: 10px; padding: 0 22px 0 20px; box-shadow: 0 5px 12px 1px #0a0f18; }
  .flash p { margin: 0 auto 4px 0; }
  .flash button { color: #e9ebed; margin-bottom: 2px; }
  .title-row { display: flex; align-items: center; gap: 10px; margin-top: 15px; }
  h1 { margin: 0 auto 2px 0; font-size: 27px; line-height: 36px; font-weight: 700; color: #ebebf0; }
  .pill { height: 39px; display: inline-flex; align-items: center; border: 2px solid #42b4ff; border-radius: 20px; background: #161d26; color: #42b4ff; font-weight: 600; font-size: 17px; line-height: 25px; padding: 0 26px 2px; white-space: nowrap; cursor: pointer; }
  .pill.copy { gap: 10px; padding-left: 20px; }
  .pill .caret { margin-left: 15px; width: 13px; height: 11px; margin-top: 3px; }
  .pill.drop { padding-right: 23px; }
  .pill.add { gap: 13px; padding-left: 22px; }
  .overview { margin-top: 21px; border: 1px solid #424650; border-radius: 20px; background: #161d26; padding: 15px 25px 14px; }
  .overview-head { display: flex; align-items: center; gap: 10px; }
  h2 { display: flex; align-items: center; gap: 14px; margin: 0 14px 2px 3px; font-size: 23px; line-height: 30px; color: #ebebf0; font-weight: 700; }
  .info { color: #42b4ff; font-weight: 600; font-size: 15px; line-height: 20px; text-decoration: none; }
  .overview-head .info { margin: 5px auto 0 0; }
  .overview-body { display: grid; grid-template-columns: minmax(0, 967fr) minmax(0, 459fr); margin-top: 36px; }
  .diagram { display: flex; flex-direction: column; align-items: flex-start; padding-right: 50px; }
  .segmented { height: 39px; display: flex; align-items: center; border: 1px solid #656871; border-radius: 20px; padding: 0 4px; }
  .segmented button { height: 30px; border: 0; border-radius: 15px; background: none; padding: 0 20px 3px; font-weight: 700; color: #dedee3; }
  .segmented .on { background: #42b4ff; color: #0f141a; }
  .segmented i { width: 1px; height: 15px; background: #656871; margin: 0 5px; }
  .node { border: 1px solid #656871; border-radius: 9px; color: #ebebf0; font-size: 21px; font-weight: 700; }
  .function-node { width: 305px; align-self: center; margin-top: 15px; }
  .node-title { display: flex; align-items: center; gap: 15px; height: 66px; padding: 0 12px; border-bottom: 1px solid #656871; }
  .layers { display: flex; align-items: center; height: 48px; padding: 4px 13px 0 15px; font-size: 17px; font-weight: 400; color: #c6c6cd; }
  .layers span { margin: 0 auto 6px 16px; }
  .layers span:last-child { margin-right: 0; }
  .sources { align-self: stretch; display: flex; align-items: flex-start; justify-content: space-between; margin: 20px 0 12px; }
  .s3-node { position: relative; width: 402px; height: 67px; display: flex; align-items: center; gap: 14px; padding: 0 13px 2px; }
  .link { position: absolute; left: 100%; top: -20px; width: 38px; height: 54px; border: solid #424650; border-width: 0 1px 1px 0; }
  dl { margin: 12px 0 0; padding: 0 0 26px 25px; border-left: 1px solid #424650; display: flex; flex-direction: column; gap: 25px; }
  dl div { display: grid; grid-auto-rows: min-content; margin-top: -1px; margin-bottom: 1px; }
  dt { font-weight: 600; color: #dedee3; display: flex; align-items: center; }
  dd { margin: 0; }
  dt .info { border-left: 1px solid #424650; padding: 3px 0 2px 10px; margin-left: 10px; }
  .dashed { display: inline-block; line-height: 22px; border-bottom: 1px dashed #dedee3; }
  .arn { max-width: 405px; word-break: break-all; }
  .arn button { display: inline-block; color: #42b4ff; margin: 0 10px 0 5px; vertical-align: -5px; }

  .tabs { display: flex; margin-top: 36px; height: 46px; border-bottom: 1px solid #424650; padding-left: 2px; }
  .tabs button, .side-tabs [role="tab"] { position: relative; border: 0; background: none; padding: 0; font-size: 19px; line-height: 34px; font-weight: 700; color: #dedee3; align-self: flex-start; }
  .tabs span { display: block; padding: 0 25px; border-right: 1px solid #424650; }
  .tabs button:first-child span { padding: 0 24px; }
  .tabs button:last-child span { border: 0; }
  .tabs .active, .side-tabs .active { color: #42b4ff; }
  .tabs .active::after, .side-tabs .active::after { content: ""; position: absolute; left: 0; right: 0; bottom: -11px; height: 5px; border-radius: 3px 3px 0 0; background: #42b4ff; }
  .next-panel { height: 40px; margin-top: 40px; border: 1px solid #424650; border-radius: 20px 20px 0 0; background: #161d26; }

  aside { width: 363px; flex: none; border-left: 1px solid #424650; }
  .side-tabs { height: 57px; display: flex; align-items: center; border-bottom: 1px solid #424650; padding-right: 31px; }
  .side-tabs [role="tab"] { margin-top: 10px; }
  .side-tabs span { display: block; padding: 0 24px; }
  .side-tabs [role="tab"]:first-child span { border-right: 1px solid #424650; padding-left: 25px; }
  .side-tabs .active::after { bottom: -13px; }
  .collapse { margin: 16px 0 0 auto; color: #ebebf0; }
  .side-body { padding: 44px 25px 0; }
  .side-body p { margin: 0; }
  .card { margin-top: 16px; border: 1px solid #424650; border-radius: 10px; padding: 20px 20px 25px; }
  h3 { display: flex; justify-content: space-between; align-items: center; margin: 0 0 19px; font-size: 18px; line-height: 25px; font-weight: 700; color: #ebebf0; white-space: nowrap; }
  .card ul { margin: 5px 0 17px; padding-left: 50px; }
  .learn { display: flex; align-items: center; gap: 2px; color: #42b4ff; text-decoration: none; margin-bottom: 26px; }
  .learn span { border-bottom: 1px solid; line-height: 22px; padding-right: 3px; }

  footer { height: 44px; flex: none; display: flex; align-items: center; border-top: 1px solid #424650; border-bottom: 1px solid #4a4a48; padding: 0 20px; font-size: 15px; line-height: 20px; color: #c6c6cd; white-space: nowrap; }
  footer button { gap: 7px; color: #ebebf0; }
  footer .feedback { margin: 0 auto 0 30px; }
  footer a { color: #ebebf0; text-decoration: none; margin-left: 30px; }
  footer span + a { margin-left: 36px; }

  /* taskbar */
  .taskbar { height: 58px; flex: none; display: flex; align-items: center; background: linear-gradient(90deg, #242423 0 42%, #2c2716 45%, #2c2916 72%, #272620 80%, #242424); color: #fff; font-size: 14px; line-height: 20px; }
  .weather { width: 433px; padding-left: 27px; gap: 9px; text-align: left; }
  .weather-icon { position: relative; }
  .weather-icon em { position: absolute; left: 12px; top: -9px; width: 20px; height: 20px; border-radius: 50%; background: #ff8f95; color: #1c1c1c; text-align: center; font-size: 14px; }
  .weather-text { display: grid; }
  .weather-text span:last-child { color: #cfcfcf; }
  .task-search { width: 275px; height: 40px; margin: 0 5px 0 16px; border: 1px solid #5b5b59; border-radius: 20px; background: #444443; display: flex; align-items: center; gap: 12px; padding: 0 14px; color: #d6d6d6; font-size: 16px; }
  .task-search input { flex: 1; min-width: 0; background: none; border: 0; outline: 0; padding: 0; }
  .apps { display: flex; gap: 5px; }
  .app { position: relative; width: 50px; height: 50px; border-radius: 6px; justify-content: center; }
  .focused { background: #3b3827; }
  .running::after, .focused::after { content: ""; position: absolute; bottom: 1px; width: 8px; height: 4px; border-radius: 2px; background: #9a9a98; }
  .focused::after { width: 20px; background: #4cc2ff; }
  .badge { position: absolute; right: 4px; top: 4px; width: 20px; height: 20px; border-radius: 50%; background: #4cc2ff; color: #111; text-align: center; font-size: 15px; }
  .profile { background: #689f38; color: #fff; font-size: 12px; }
  .prime { width: 30px; height: 30px; background: #1a98ff; color: #06213d; display: grid; grid-template-rows: 11px 11px 6px; justify-items: center; font-size: 8px; line-height: 11px; font-weight: 700; }
  .tray { margin-left: auto; display: flex; align-items: center; gap: 11px; padding-right: 24px; font-size: 15px; }
  .cloud { margin: 0 11px 0 13px; }
  .lang, .clock { display: grid; text-align: center; }
  .lang { margin-right: 11px; }
  .clock { text-align: right; margin-left: 7px; }
</style>
